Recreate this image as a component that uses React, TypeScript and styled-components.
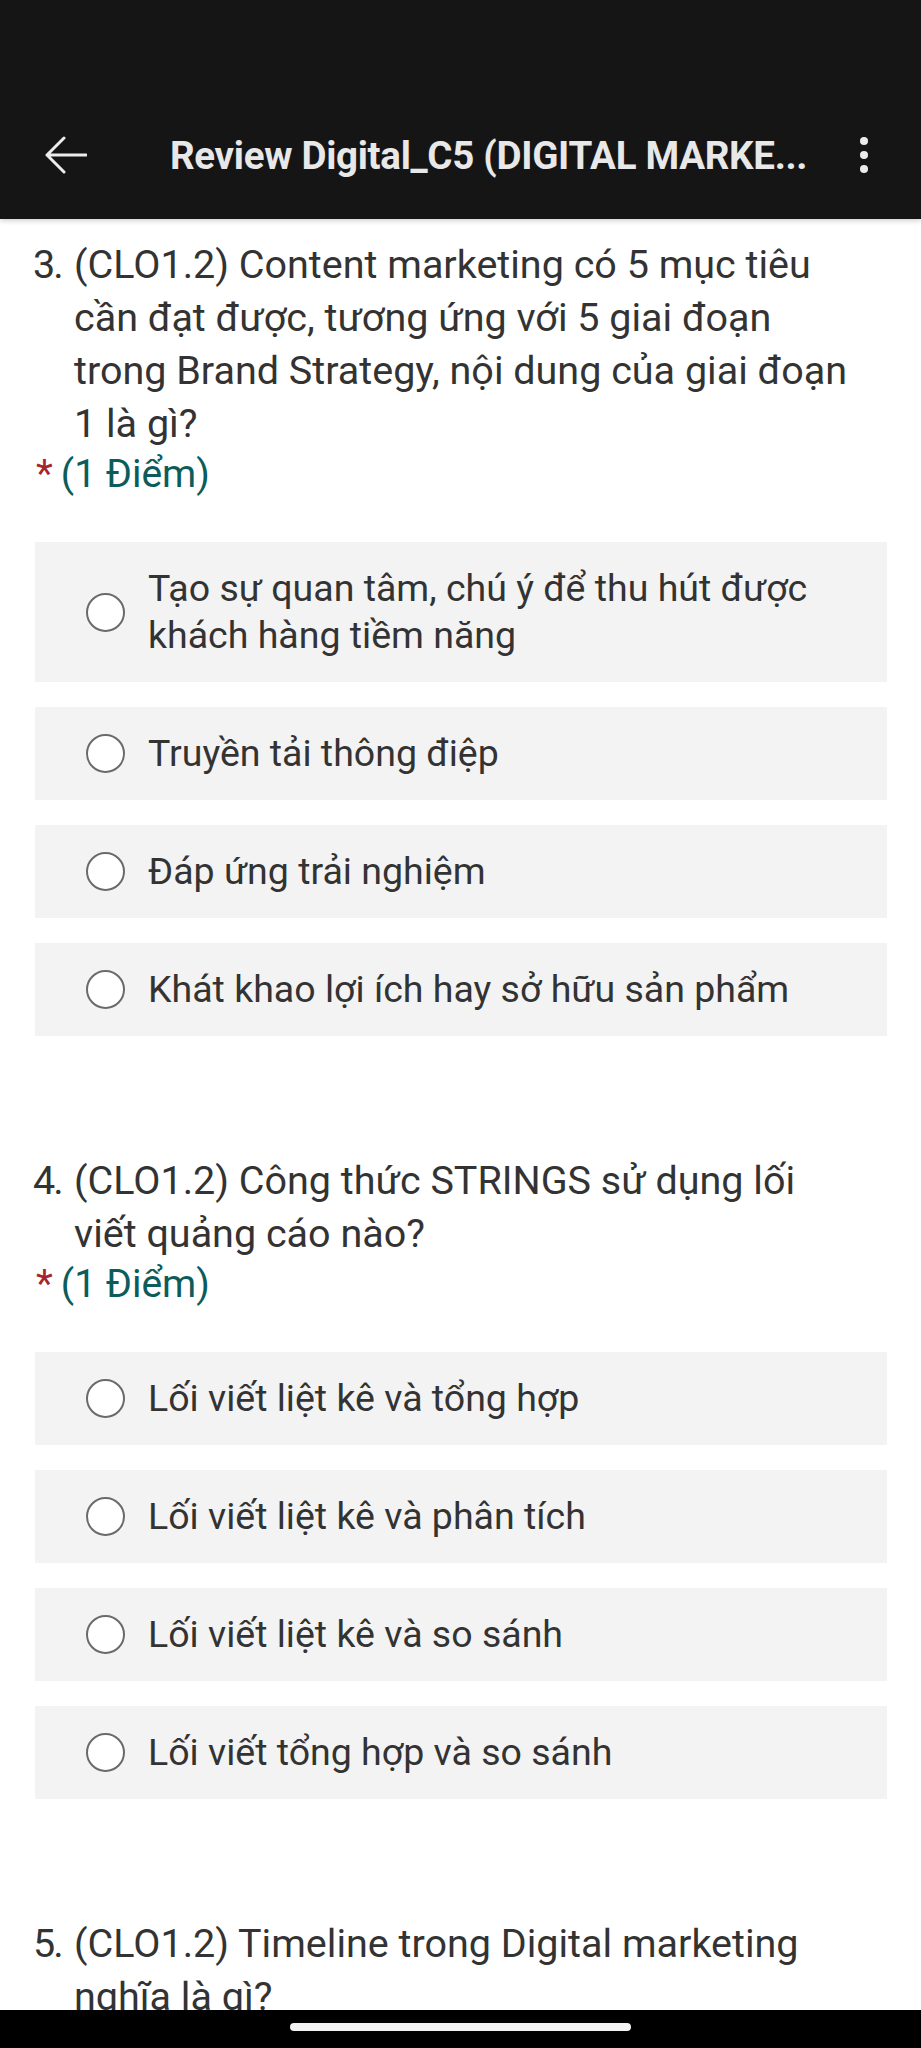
import React from "react";
import styled, { createGlobalStyle } from "styled-components";

const GlobalStyle = createGlobalStyle`
  html, body {
    margin: 0;
    padding: 0;
    background: #ffffff;
  }
  body {
    font-family: Roboto, "Noto Sans", "Liberation Sans", sans-serif;
    color: #333333;
  }
  * {
    box-sizing: border-box;
  }
`;

const Page = styled.div`
  width: 921px;
  min-height: 2048px;
  background: #fff;
  padding-bottom: 120px;
`;

const Header = styled.header`
  height: 219px;
  padding-top: 110px;
  background: #151515;
  box-shadow: 0 2px 5px rgba(0, 0, 0, 0.18);
`;

const Toolbar = styled.div`
  height: 90px;
  display: flex;
  align-items: center;
  padding-left: 45px;
`;

const IconButton = styled.button`
  display: flex;
  align-items: center;
  justify-content: center;
  background: none;
  border: 0;
  padding: 0;
  color: #ececec;
  cursor: pointer;
`;

const Title = styled.h1`
  flex: 1;
  margin: 0 0 0 83px;
  font-size: 38.5px;
  font-weight: 700;
  color: #e8e8e8;
  white-space: nowrap;
  letter-spacing: -0.3px;
`;

const MoreButton = styled.div`
  width: 8px;
  margin-right: 53px;
  display: flex;
  flex-direction: column;
  gap: 6px;
`;

const Dot = styled.span`
  width: 8px;
  height: 8px;
  border-radius: 50%;
  background: #ececec;
`;

const Content = styled.main`
  display: flex;
  flex-direction: column;
  gap: 118px;
  padding-top: 19px;
`;

const Question = styled.section`
  display: flex;
  flex-direction: column;
`;

const QuestionTitle = styled.div`
  display: flex;
  padding: 0 57px 0 33px;
  font-size: 39.5px;
  line-height: 53px;
  color: #333333;
`;

const Number = styled.span`
  flex: 0 0 41px;
  letter-spacing: -2px;
`;

const QuestionText = styled.span`
  flex: 1;
`;

const Points = styled.div`
  padding-left: 36px;
  font-size: 39px;
  line-height: 49px;
  color: #0d5c5c;
`;

const Required = styled.span`
  color: #a4262c;
  margin-right: 8px;
`;

const Options = styled.div`
  display: flex;
  flex-direction: column;
  gap: 25px;
  margin: 43px 34px 0 35px;
`;

const Option = styled.label`
  display: flex;
  align-items: center;
  gap: 23px;
  padding: 23px 24px 23px 51px;
  background: #f3f3f3;
  cursor: pointer;
`;

const Radio = styled.span`
  flex: 0 0 39px;
  height: 39px;
  border-radius: 50%;
  border: 2.5px solid #6a6a6a;
  background: #fff;
`;

const OptionText = styled.span`
  font-size: 37.5px;
  line-height: 47px;
  color: #333333;
`;

const NavBar = styled.div`
  position: fixed;
  left: 0;
  right: 0;
  bottom: 0;
  height: 38px;
  background: #000;
  display: flex;
  justify-content: center;
  padding-top: 13px;
`;

const HomePill = styled.span`
  width: 341px;
  height: 8px;
  border-radius: 4px;
  background: #f2f2f2;
`;

type Q = {
  num: string;
  text: string;
  options: string[];
  points?: boolean;
};

const questions: Q[] = [
  {
    num: "3.",
    text: "(CLO1.2) Content marketing có 5 mục tiêu cần đạt được, tương ứng với 5 giai đoạn trong Brand Strategy, nội dung của giai đoạn 1 là gì?",
    points: true,
    options: [
      "Tạo sự quan tâm, chú ý để thu hút được khách hàng tiềm năng",
      "Truyền tải thông điệp",
      "Đáp ứng trải nghiệm",
      "Khát khao lợi ích hay sở hữu sản phẩm",
    ],
  },
  {
    num: "4.",
    text: "(CLO1.2) Công thức STRINGS sử dụng lối viết quảng cáo nào?",
    points: true,
    options: [
      "Lối viết liệt kê và tổng hợp",
      "Lối viết liệt kê và phân tích",
      "Lối viết liệt kê và so sánh",
      "Lối viết tổng hợp và so sánh",
    ],
  },
  {
    num: "5.",
    text: "(CLO1.2) Timeline trong Digital marketing nghĩa là gì?",
    points: true,
    options: [
      "Khoảng thời gian thực hiện chiến dịch",
      "Lịch trình đăng tải nội dung",
    ],
  },
];

const BackArrow = () => (
  <svg width="42" height="38" viewBox="0 0 42 38" fill="none">
    <path
      d="M41 19H2M19 2L2 19l17 17"
      stroke="currentColor"
      strokeWidth="3"
      strokeLinecap="round"
      strokeLinejoin="round"
    />
  </svg>
);

export default function App() {
  return (
    <>
      <GlobalStyle />
      <Page>
        <Header>
          <Toolbar>
            <IconButton aria-label="Back">
              <BackArrow />
            </IconButton>
            <Title>Review Digital_C5 (DIGITAL MARKE...</Title>
            <MoreButton>
              <Dot />
              <Dot />
              <Dot />
            </MoreButton>
          </Toolbar>
        </Header>
        <Content>
          {questions.map((q) => (
            <Question key={q.num}>
              <QuestionTitle>
                <Number>{q.num}</Number>
                <QuestionText>{q.text}</QuestionText>
              </QuestionTitle>
              {q.points && (
                <Points>
                  <Required>*</Required>(1 Điểm)
                </Points>
              )}
              <Options>
                {q.options.map((o) => (
                  <Option key={o}>
                    <Radio />
                    <OptionText>{o}</OptionText>
                  </Option>
                ))}
              </Options>
            </Question>
          ))}
        </Content>
      </Page>
      <NavBar>
        <HomePill />
      </NavBar>
    </>
  );
}
